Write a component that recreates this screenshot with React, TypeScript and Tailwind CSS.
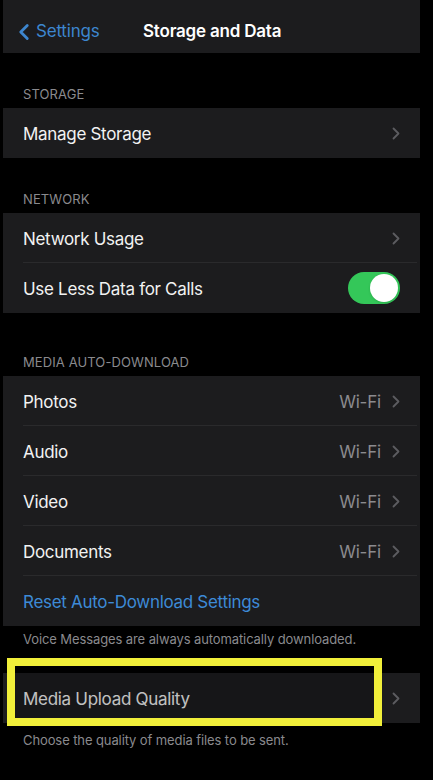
import { ChevronLeft } from 'lucide-react';

const font = { fontFamily: 'Inter, "Liberation Sans", sans-serif' };

function Chevron() {
  return (
    <svg width="8" height="13" viewBox="0 0 8 13" className="shrink-0">
      <path d="M1.5 1.5 L6.5 6.5 L1.5 11.5" fill="none" stroke="#5c5c60" strokeWidth="1.8" strokeLinecap="round" strokeLinejoin="round" />
    </svg>
  );
}

function Row({ label, value, chevron = true, divider = false, blue = false, children }: {
  label: string;
  value?: string;
  chevron?: boolean;
  divider?: boolean;
  blue?: boolean;
  children?: React.ReactNode;
}) {
  return (
    <div className="relative h-[50px] flex items-center pl-5 pr-5">
      <span className={`flex-1 pt-[4px] text-[17px] tracking-[-0.3px] ${blue ? 'text-[#3d8ad6]' : 'text-[#f2f2f2]'}`}>{label}</span>
      {value && <span className="pt-[4px] text-[17px] text-[#8b8b8f] mr-[11px] tracking-[-0.2px]">{value}</span>}
      {chevron && <Chevron />}
      {children}
      {divider && <div className="absolute left-5 right-[3px] bottom-0 h-px bg-[#2a2a2c]" />}
    </div>
  );
}

function SectionLabel({ text, h }: { text: string; h: string }) {
  return (
    <div className={`${h} flex items-end pl-5 pb-[6px]`}>
      <span className="text-[13px] leading-4 text-[#8a8a8e] uppercase tracking-[0.1px]">{text}</span>
    </div>
  );
}

function Toggle() {
  return (
    <div className="w-[52px] h-[32px] rounded-full bg-[#34c759] p-[2px] flex justify-end">
      <div className="w-[28px] h-[28px] rounded-full bg-white shadow" />
    </div>
  );
}

export default function App() {
  return (
    <div className="w-[433px] h-[780px] bg-black overflow-hidden pl-[3px] pr-[13px]" style={font}>
      {/* Nav bar */}
      <div className="h-[53px] bg-[#1c1c1e] flex items-center pt-[10px] relative">
        <div className="flex items-center text-[#3d86cf] pl-[8px]">
          <ChevronLeft size={26} strokeWidth={2.6} className="-mr-[1px]" />
          <span className="text-[17px] tracking-[-0.2px]">Settings</span>
        </div>
        <span className="absolute left-[140px] text-[17px] font-semibold text-white tracking-[-0.2px]">Storage and Data</span>
      </div>

      <SectionLabel text="Storage" h="h-[55px]" />
      <div className="bg-[#1c1c1e]">
        <Row label="Manage Storage" />
      </div>

      <SectionLabel text="Network" h="h-[55px]" />
      <div className="bg-[#1c1c1e]">
        <Row label="Network Usage" divider />
        <Row label="Use Less Data for Calls" chevron={false}>
          <Toggle />
        </Row>
      </div>

      <SectionLabel text="Media Auto-Download" h="h-[63px]" />
      <div className="bg-[#1c1c1e]">
        <Row label="Photos" value="Wi-Fi" divider />
        <Row label="Audio" value="Wi-Fi" divider />
        <Row label="Video" value="Wi-Fi" divider />
        <Row label="Documents" value="Wi-Fi" divider />
        <Row label="Reset Auto-Download Settings" chevron={false} blue />
      </div>
      <p className="pl-5 pt-[5px] text-[13px] leading-4 text-[#8a8a8e] tracking-[-0.1px]">Voice Messages are always automatically downloaded.</p>

      <div className="h-[26px]" />
      <div className="bg-[#1c1c1e] relative">
        <Row label="Media Upload Quality" />
        <div className="absolute left-[4px] top-[-15px] w-[375px] h-[68px] border-[8px] border-[#f1ef3a] bg-black/20" />
      </div>
      <p className="pl-5 pt-[9px] text-[13px] leading-4 text-[#8a8a8e] tracking-[-0.1px]">Choose the quality of media files to be sent.</p>
    </div>
  );
}
